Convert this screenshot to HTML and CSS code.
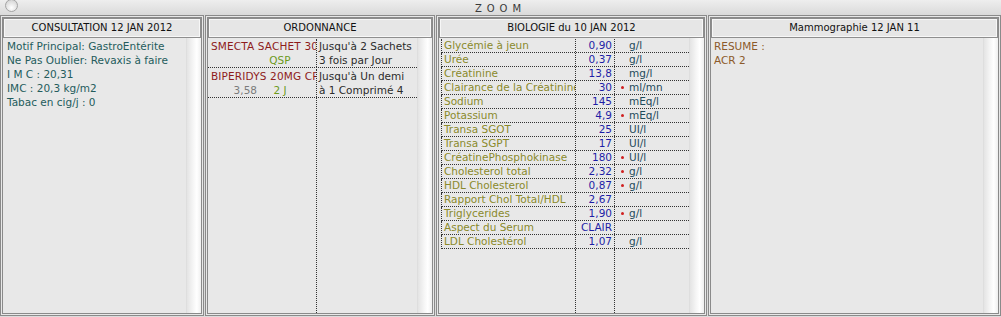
FILE: index.html
```html
<!DOCTYPE html>
<html lang="fr">
<head>
  <meta charset="UTF-8">
  <title>ZOOM</title>
  <link rel="stylesheet" href="styles.css">
</head>
<body>
  <div class="titlebar">
    <span class="close-btn"></span>
    <span class="title">ZOOM</span>
    <span></span>
  </div>

  <div class="panels">
    <!-- Consultation -->
    <section class="panel consult">
      <div class="panel-head">CONSULTATION 12 JAN 2012</div>
      <div class="panel-body">
        <div class="panel-main notes">
          <div>Motif Principal: GastroEntérite</div>
          <div>Ne Pas Oublier: Revaxis à faire</div>
          <div>I M C : 20,31</div>
          <div>IMC : 20,3 kg/m2</div>
          <div>Tabac en cig/j : 0</div>
        </div>
        <div class="scroll"></div>
      </div>
    </section>

    <!-- Ordonnance -->
    <section class="panel ordo">
      <div class="panel-head">ORDONNANCE</div>
      <div class="panel-body">
        <div class="panel-main rx-list">
          <div class="rx-row">
            <div class="rx-drug">
              <div class="drug-name">SMECTA SACHET 30 G</div>
              <div class="drug-sub"><span class="qty"></span><span class="dur">QSP</span></div>
            </div>
            <div class="rx-posology">
              <div>Jusqu'à 2 Sachets</div>
              <div>3 fois par Jour</div>
            </div>
          </div>
          <div class="rx-row">
            <div class="rx-drug">
              <div class="drug-name">BIPERIDYS 20MG CP</div>
              <div class="drug-sub"><span class="qty">3,58</span><span class="dur">2 J</span></div>
            </div>
            <div class="rx-posology">
              <div>Jusqu'à Un demi</div>
              <div>à 1 Comprimé 4</div>
            </div>
          </div>
          <div class="rx-row rx-fill">
            <div class="rx-drug"></div>
            <div class="rx-posology"></div>
          </div>
        </div>
        <div class="scroll"></div>
      </div>
    </section>

    <!-- Biologie -->
    <section class="panel bio">
      <div class="panel-head">BIOLOGIE du 10 JAN 2012</div>
      <div class="panel-body">
        <div class="panel-main lab-list">
          <div class="lab-row"><span class="lab-name">Glycémie à jeun</span><span class="lab-val">0,90</span><span class="lab-unit"><i class="flag off"></i>g/l</span></div>
          <div class="lab-row"><span class="lab-name">Urée</span><span class="lab-val">0,37</span><span class="lab-unit"><i class="flag off"></i>g/l</span></div>
          <div class="lab-row"><span class="lab-name">Créatinine</span><span class="lab-val">13,8</span><span class="lab-unit"><i class="flag off"></i>mg/l</span></div>
          <div class="lab-row"><span class="lab-name">Clairance de la Créatinine</span><span class="lab-val">30</span><span class="lab-unit"><i class="flag"></i>ml/mn</span></div>
          <div class="lab-row"><span class="lab-name">Sodium</span><span class="lab-val">145</span><span class="lab-unit"><i class="flag off"></i>mEq/l</span></div>
          <div class="lab-row"><span class="lab-name">Potassium</span><span class="lab-val">4,9</span><span class="lab-unit"><i class="flag"></i>mEq/l</span></div>
          <div class="lab-row"><span class="lab-name">Transa SGOT</span><span class="lab-val">25</span><span class="lab-unit"><i class="flag off"></i>UI/l</span></div>
          <div class="lab-row"><span class="lab-name">Transa SGPT</span><span class="lab-val">17</span><span class="lab-unit"><i class="flag off"></i>UI/l</span></div>
          <div class="lab-row"><span class="lab-name">CréatinePhosphokinase</span><span class="lab-val">180</span><span class="lab-unit"><i class="flag"></i>UI/l</span></div>
          <div class="lab-row"><span class="lab-name">Cholesterol total</span><span class="lab-val">2,32</span><span class="lab-unit"><i class="flag"></i>g/l</span></div>
          <div class="lab-row"><span class="lab-name">HDL Cholesterol</span><span class="lab-val">0,87</span><span class="lab-unit"><i class="flag"></i>g/l</span></div>
          <div class="lab-row"><span class="lab-name">Rapport Chol Total/HDL</span><span class="lab-val">2,67</span><span class="lab-unit"></span></div>
          <div class="lab-row"><span class="lab-name">Triglycerides</span><span class="lab-val">1,90</span><span class="lab-unit"><i class="flag"></i>g/l</span></div>
          <div class="lab-row"><span class="lab-name">Aspect du Serum</span><span class="lab-val">CLAIR</span><span class="lab-unit"></span></div>
          <div class="lab-row"><span class="lab-name">LDL Cholestérol</span><span class="lab-val">1,07</span><span class="lab-unit"><i class="flag off"></i>g/l</span></div>
          <div class="lab-row lab-fill"><span class="lab-name"></span><span class="lab-val"></span><span class="lab-unit"></span></div>
        </div>
        <div class="scroll"></div>
      </div>
    </section>

    <!-- Mammographie -->
    <section class="panel mammo">
      <div class="panel-head">Mammographie 12 JAN 11</div>
      <div class="panel-body">
        <div class="panel-main report">
          <div>RESUME :</div>
          <div>ACR 2</div>
        </div>
        <div class="scroll"></div>
      </div>
    </section>
  </div>
</body>
</html>
```

FILE: styles.css
```css
* {
  box-sizing: border-box;
}

body {
  margin: 0;
  height: 317px;
  display: flex;
  flex-direction: column;
  overflow: hidden;
  background-color: #dcdcdc;
  font-family: "DejaVu Sans", sans-serif;
  font-size: 10.5px;
}

/* Window title bar */
.titlebar {
  height: 15px;
  display: grid;
  grid-template-columns: 1fr auto 1fr;
  align-items: start;
  overflow: hidden;
  background: linear-gradient(#eeeeee, #dadada);
}

.close-btn {
  width: 13px;
  height: 13px;
  margin: -1px 0 0 5px;
  border-radius: 50%;
  border: 1px solid #a4a4a4;
  background: radial-gradient(circle at 50% 70%, #ffffff, #d8d8d8 75%);
}

.title {
  margin-top: 3px;
  font-size: 10px;
  line-height: 12px;
  letter-spacing: 5px;
  color: #3a3a3a;
}

/* Panels */
.panels {
  flex: 1;
  display: flex;
  gap: 1px;
  padding-bottom: 1px;
}

.panel {
  display: flex;
  flex-direction: column;
  border: 3px double #8a8a8a;
  background-color: #e8e8e8;
}

.consult { width: 204px; }
.ordo { width: 230px; }
.bio { width: 271px; }
.mammo { width: 293px; }

.panel-head {
  height: 20px;
  border: 1px solid #8e8e8e;
  box-shadow: inset 0 0 0 1px #f7f7f7;
  background-color: #e6e6e6;
  text-align: center;
  font-size: 10px;
  line-height: 18px;
  color: #111;
  white-space: nowrap;
}

.panel-body {
  flex: 1;
  display: flex;
  min-height: 0;
}

.panel-main {
  flex: 1;
  min-width: 0;
}

.scroll {
  width: 15px;
  border-left: 1px solid #dedede;
  background: linear-gradient(to right, #e4e4e4, #f6f6f6 45%, #ffffff 70%, #efefef);
}

/* Consultation notes */
.notes {
  padding: 1px 0 0 4px;
  line-height: 14px;
  color: #245c5c;
}

/* Ordonnance */
.rx-list {
  display: flex;
  flex-direction: column;
}

.rx-row {
  display: grid;
  grid-template-columns: 109px 1fr;
  line-height: 14px;
  border-bottom: 1px dotted #333;
  padding-top: 1px;
}

.rx-fill {
  flex: 1;
  border-bottom: none;
  padding-top: 0;
}

.rx-drug {
  border-right: 1px dotted #333;
  overflow: hidden;
  white-space: nowrap;
}

.drug-name {
  padding-left: 3px;
  letter-spacing: 0.15px;
  color: #8e1b1b;
}

.drug-sub {
  display: grid;
  grid-template-columns: 52px 40px;
}

.qty {
  text-align: right;
  padding-right: 3px;
  color: #7c7c7c;
}

.dur {
  text-align: center;
  color: #6c9a1c;
}

.rx-posology {
  padding-left: 2px;
  color: #2c2c2c;
  white-space: nowrap;
  overflow: hidden;
}

/* Biologie */
.lab-list {
  display: flex;
  flex-direction: column;
  padding: 1px 0 0 2px;
}

.lab-row {
  display: grid;
  grid-template-columns: 134px 39px 1fr;
  height: 14px;
  line-height: 13px;
  border-left: 1px dotted #333;
  border-bottom: 1px dotted #333;
}

.lab-fill {
  flex: 1;
  border: none;
  margin-left: 1px;
}

.lab-name {
  padding-left: 2px;
  border-right: 1px dotted #333;
  overflow: hidden;
  white-space: nowrap;
  color: #8a8a2c;
}

.lab-val {
  padding-right: 2px;
  border-right: 1px dotted #333;
  text-align: right;
  color: #1e1ea6;
}

.lab-unit {
  display: flex;
  align-items: center;
  color: #1f4b5b;
}

.flag {
  width: 3px;
  height: 3px;
  margin: 0 5px 0 6px;
  border-radius: 50%;
  background-color: #d02020;
}

.flag.off {
  background-color: transparent;
}

/* Mammographie */
.report {
  padding: 1px 0 0 3px;
  line-height: 14px;
  color: #8c5a2a;
}
```
